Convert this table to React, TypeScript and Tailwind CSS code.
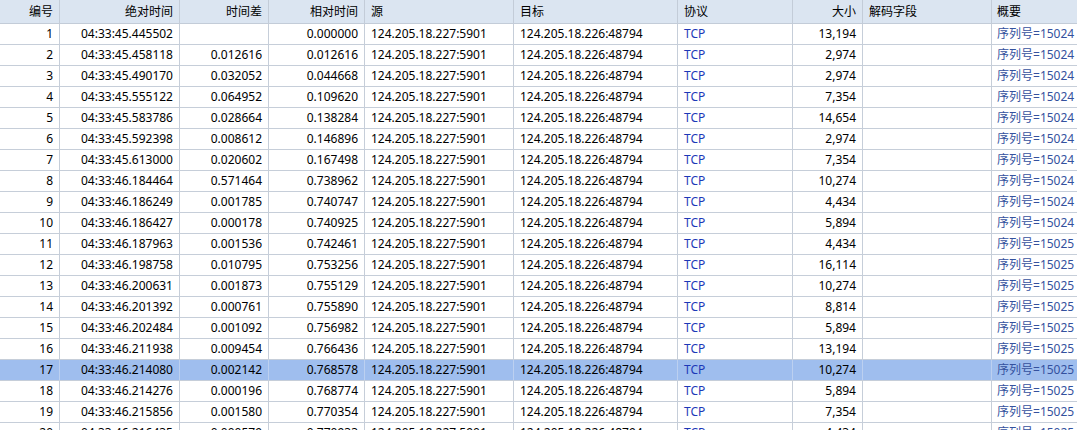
import React from 'react';

type Packet = {
  no: number;
  abs: string;
  delta: string;
  rel: string;
  size: string;
  seq: string;
};

const rows: Packet[] = [
  { no: 1, abs: '04:33:45.445502', delta: '', rel: '0.000000', size: '13,194', seq: '15024' },
  { no: 2, abs: '04:33:45.458118', delta: '0.012616', rel: '0.012616', size: '2,974', seq: '15024' },
  { no: 3, abs: '04:33:45.490170', delta: '0.032052', rel: '0.044668', size: '2,974', seq: '15024' },
  { no: 4, abs: '04:33:45.555122', delta: '0.064952', rel: '0.109620', size: '7,354', seq: '15024' },
  { no: 5, abs: '04:33:45.583786', delta: '0.028664', rel: '0.138284', size: '14,654', seq: '15024' },
  { no: 6, abs: '04:33:45.592398', delta: '0.008612', rel: '0.146896', size: '2,974', seq: '15024' },
  { no: 7, abs: '04:33:45.613000', delta: '0.020602', rel: '0.167498', size: '7,354', seq: '15024' },
  { no: 8, abs: '04:33:46.184464', delta: '0.571464', rel: '0.738962', size: '10,274', seq: '15024' },
  { no: 9, abs: '04:33:46.186249', delta: '0.001785', rel: '0.740747', size: '4,434', seq: '15024' },
  { no: 10, abs: '04:33:46.186427', delta: '0.000178', rel: '0.740925', size: '5,894', seq: '15024' },
  { no: 11, abs: '04:33:46.187963', delta: '0.001536', rel: '0.742461', size: '4,434', seq: '15025' },
  { no: 12, abs: '04:33:46.198758', delta: '0.010795', rel: '0.753256', size: '16,114', seq: '15025' },
  { no: 13, abs: '04:33:46.200631', delta: '0.001873', rel: '0.755129', size: '10,274', seq: '15025' },
  { no: 14, abs: '04:33:46.201392', delta: '0.000761', rel: '0.755890', size: '8,814', seq: '15025' },
  { no: 15, abs: '04:33:46.202484', delta: '0.001092', rel: '0.756982', size: '5,894', seq: '15025' },
  { no: 16, abs: '04:33:46.211938', delta: '0.009454', rel: '0.766436', size: '13,194', seq: '15025' },
  { no: 17, abs: '04:33:46.214080', delta: '0.002142', rel: '0.768578', size: '10,274', seq: '15025' },
  { no: 18, abs: '04:33:46.214276', delta: '0.000196', rel: '0.768774', size: '5,894', seq: '15025' },
  { no: 19, abs: '04:33:46.215856', delta: '0.001580', rel: '0.770354', size: '7,354', seq: '15025' },
  { no: 20, abs: '04:33:46.216435', delta: '0.000579', rel: '0.770933', size: '4,434', seq: '15025' },
];

const SELECTED = 17;

function Row({ p }: { p: Packet }) {
  const sel = p.no === SELECTED;
  const line = sel ? 'border-[#bcd0f0]' : 'border-[#c6ced9]';
  const cell = `h-full border-r ${line} flex items-center px-[6px] whitespace-nowrap overflow-hidden`;

  return (
    <div
      className={`flex h-[21px] shrink-0 border-b border-[#c6ced9] ${
        sel ? 'bg-[#9fbeee]' : 'bg-white'
      }`}
    >
      <div className={`${cell} w-[60px] justify-end`}>{p.no}</div>
      <div className={`${cell} w-[120px] justify-end`}>{p.abs}</div>
      <div className={`${cell} w-[89px] justify-end`}>{p.delta}</div>
      <div className={`${cell} w-[96px] justify-end`}>{p.rel}</div>
      <div className={`${cell} w-[149px]`}>124.205.18.227:5901</div>
      <div className={`${cell} w-[164px]`}>124.205.18.226:48794</div>
      <div className={`${cell} w-[115px] text-[#1c38b8]`}>TCP</div>
      <div className={`${cell} w-[70px] justify-end`}>{p.size}</div>
      <div className={`${cell} w-[129px]`}></div>
      <div className="h-full flex-1 flex items-center pl-[5px] whitespace-nowrap overflow-hidden text-[#34519e]">
        序列号={p.seq}
      </div>
    </div>
  );
}

export default function App() {
  const head = 'h-full border-r border-[#c3ccd8] flex items-center px-[6px] whitespace-nowrap';

  return (
    <div
      className="w-[1077px] h-[430px] overflow-hidden bg-white text-[12px] text-black flex flex-col"
      style={{ fontFamily: '"Noto Sans", "Noto Sans CJK SC", sans-serif' }}
    >
      <div className="flex h-[24px] shrink-0 border-b border-[#c3ccd8] bg-[#dbe5f1]">
        <div className={`${head} w-[60px] justify-end`}>编号</div>
        <div className={`${head} w-[120px] justify-end`}>绝对时间</div>
        <div className={`${head} w-[89px] justify-end`}>时间差</div>
        <div className={`${head} w-[96px] justify-end`}>相对时间</div>
        <div className={`${head} w-[149px]`}>源</div>
        <div className={`${head} w-[164px]`}>目标</div>
        <div className={`${head} w-[115px]`}>协议</div>
        <div className={`${head} w-[70px] justify-end`}>大小</div>
        <div className={`${head} w-[129px]`}>解码字段</div>
        <div className="h-full flex-1 flex items-center pl-[5px]">概要</div>
      </div>
      {rows.map((p) => (
        <Row key={p.no} p={p} />
      ))}
    </div>
  );
}
